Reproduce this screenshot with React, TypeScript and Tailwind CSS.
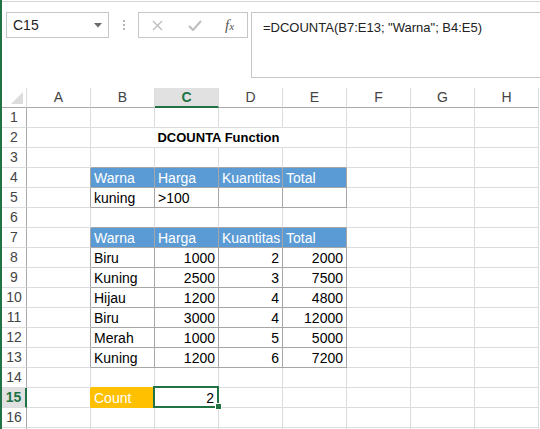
import React from "react";

const COLS = ["A", "B", "C", "D", "E", "F", "G", "H"];

type Cell = { v: string; align?: "l" | "r" | "c"; bold?: boolean };

const data: Record<number, (Cell | null)[]> = {
  4: [null, { v: "Warna" }, { v: "Harga" }, { v: "Kuantitas" }, { v: "Total" }],
  5: [null, { v: "kuning" }, { v: ">100" }, { v: "" }, { v: "" }],
  7: [null, { v: "Warna" }, { v: "Harga" }, { v: "Kuantitas" }, { v: "Total" }],
};
const rowsData: [string, string, string, string][] = [
  ["Biru", "1000", "2", "2000"],
  ["Kuning", "2500", "3", "7500"],
  ["Hijau", "1200", "4", "4800"],
  ["Biru", "3000", "4", "12000"],
  ["Merah", "1000", "5", "5000"],
  ["Kuning", "1200", "6", "7200"],
];
rowsData.forEach((r, i) => {
  data[8 + i] = [
    null,
    { v: r[0] },
    { v: r[1], align: "r" },
    { v: r[2], align: "r" },
    { v: r[3], align: "r" },
  ];
});

const inTable = (r: number, c: number) =>
  ((r >= 4 && r <= 5) || (r >= 7 && r <= 13)) && c >= 2 && c <= 5;
const isOrange = (r: number, c: number) => r === 15 && c === 2;
const isBlue = (r: number, c: number) => (r === 4 || r === 7) && c >= 2 && c <= 5;

function rightCls(r: number, c: number) {
  if (inTable(r, c) || inTable(r, c + 1)) return "border-r-[#a6a6a6]";
  if (isOrange(r, c) || isOrange(r, c + 1)) return "border-r-[#ffc000]";
  return "border-r-[#dadcdd]";
}
function bottomCls(r: number, c: number) {
  if (inTable(r, c) || inTable(r + 1, c)) return "border-b-[#a6a6a6]";
  if (isOrange(r, c) || isOrange(r + 1, c)) return "border-b-[#ffc000]";
  return "border-b-[#dadcdd]";
}

function GridCell({ r, c }: { r: number; c: number }) {
  const cell = data[r]?.[c - 1] ?? null;
  let bg = "bg-white";
  let color = "text-black";
  if (isBlue(r, c)) {
    bg = "bg-[#5b9bd5]";
    color = "text-white";
  }
  let content: React.ReactNode = cell ? cell.v : "";
  let align = cell?.align === "r" ? "justify-end pr-[3px]" : "justify-start pl-[3px]";
  if (isOrange(r, c)) {
    bg = "bg-[#ffc000]";
    color = "text-white";
    content = "Count";
  }
  const selected = r === 15 && c === 3;
  if (selected) {
    content = "2";
    align = "justify-end pr-[4px]";
  }
  return (
    <div
      className={`relative flex items-center whitespace-nowrap overflow-visible border-r border-b ${rightCls(
        r,
        c
      )} ${bottomCls(r, c)} ${bg} ${color} ${align}`}
    >
      <span className="leading-[20px]">{content}</span>
      {selected && (
        <>
          <div className="absolute left-[-2px] top-[-2px] w-[66px] h-[22px] border-2 border-[#217346] z-10" />
          <div className="absolute left-[60px] top-[15px] w-[7px] h-[7px] bg-[#217346] border border-white z-20" />
        </>
      )}
    </div>
  );
}

export default function App() {
  const rows = Array.from({ length: 17 }, (_, i) => i + 1);
  return (
    <div
      className="w-[540px] h-[429px] overflow-hidden bg-white border-l-2 border-l-[#217346] text-[14px]"
      style={{ fontFamily: '"Liberation Sans", Arial, sans-serif' }}
    >
      {/* formula bar area */}
      <div className="h-[88px] overflow-hidden">
        <div className="h-px" />
        <div className="h-px bg-[#d6d6d6]" />
        <div className="flex items-start pt-[10px] pl-[4px]">
          <div className="relative w-[103px] h-[26px] border border-[#c6c6c6] flex items-center pl-[6px] text-[#222]">
            C15
            <svg className="absolute left-[87px] top-[10px]" width="8" height="5" viewBox="0 0 8 5">
              <polygon points="0,0 8,0 4,4.5" fill="#6b6b6b" />
            </svg>
          </div>
          <div className="w-[29px] h-[26px] flex flex-col items-center justify-center gap-[2px]">
            <div className="w-[2px] h-[2px] bg-[#b5b5b5]" />
            <div className="w-[2px] h-[2px] bg-[#b5b5b5]" />
            <div className="w-[2px] h-[2px] bg-[#b5b5b5]" />
          </div>
          <div className="w-[110px] h-[26px] border border-[#c6c6c6] flex items-center">
            <svg className="ml-[13px]" width="11" height="11" viewBox="0 0 11 11">
              <path d="M1 1 L10 10 M10 1 L1 10" stroke="#bdbdbd" strokeWidth="1.4" />
            </svg>
            <svg className="ml-[25px]" width="14" height="11" viewBox="0 0 14 11">
              <path d="M1 6 L5 10 L13 1" stroke="#bdbdbd" strokeWidth="2" fill="none" />
            </svg>
            <span
              className="ml-[23px] italic text-[#555] text-[15px] leading-none"
              style={{ fontFamily: '"Liberation Serif", "Times New Roman", serif' }}
            >
              f<span className="text-[11px]">x</span>
            </span>
          </div>
          <div className="ml-[3px] flex-1 h-[66px] border border-r-0 border-[#c6c6c6] pl-[11px] pt-[6px] text-[13px] leading-[18px] text-[#222] whitespace-nowrap">
            =DCOUNTA(B7:E13; "Warna"; B4:E5)
          </div>
        </div>
      </div>

      {/* grid */}
      <div className="grid grid-cols-[25px_repeat(8,64px)] auto-rows-[20px]">
        {/* corner */}
        <div className="relative border-r border-b border-r-[#dadcdd] border-b-[#ababab] bg-white">
          <svg className="absolute right-[3px] bottom-[3px]" width="12" height="12" viewBox="0 0 12 12">
            <polygon points="12,0 12,12 0,12" fill="#dcdcdc" />
          </svg>
        </div>
        {COLS.map((l) =>
          l === "C" ? (
            <div
              key={l}
              className="flex items-center justify-center bg-[#e1e1e1] border-r border-r-[#dadcdd] border-b-2 border-b-[#217346] text-[#217346] font-bold"
            >
              {l}
            </div>
          ) : (
            <div
              key={l}
              className="flex items-center justify-center bg-white border-r border-r-[#dadcdd] border-b border-b-[#ababab] text-[#444]"
            >
              {l}
            </div>
          )
        )}
        {rows.map((r) => (
          <React.Fragment key={r}>
            {r === 15 ? (
              <div className="flex items-center justify-center bg-[#e1e1e1] border-r-2 border-r-[#217346] border-b border-b-[#dadcdd] text-[#217346] font-bold">
                {r}
              </div>
            ) : (
              <div className="flex items-center justify-center bg-white border-r border-r-[#ababab] border-b border-b-[#dadcdd] text-[#444]">
                {r <= 16 ? r : ""}
              </div>
            )}
            {r === 2 ? (
              <>
                <GridCell r={2} c={1} />
                <div className="col-span-4 flex items-center justify-center border-r border-b border-r-[#dadcdd] border-b-[#dadcdd] font-bold text-[13px] text-black">
                  DCOUNTA Function
                </div>
                <GridCell r={2} c={6} />
                <GridCell r={2} c={7} />
                <GridCell r={2} c={8} />
              </>
            ) : (
              COLS.map((_, ci) => <GridCell key={ci} r={r} c={ci + 1} />)
            )}
          </React.Fragment>
        ))}
      </div>
    </div>
  );
}
